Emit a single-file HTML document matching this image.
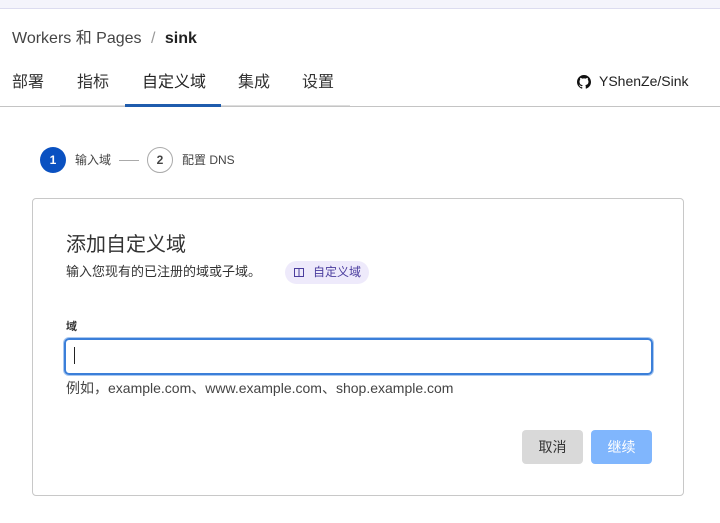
<!DOCTYPE html>
<html><head><meta charset="utf-8"><style>
*{margin:0;padding:0;box-sizing:border-box}
body{width:720px;height:523px;background:#fff;font-family:"Liberation Sans","Noto Sans CJK SC",sans-serif;color:#333;position:relative;overflow:hidden}
.top{position:absolute;left:0;top:0;width:720px;height:9px;background:#f4f4fb;border-bottom:1px solid #dcdcef}
.abs{position:absolute;white-space:nowrap}
</style></head><body>
<div class="top"></div>
<div class="abs" style="left:12px;top:24px;font-size:16px;color:#444">Workers 和 Pages <span style="color:#999;margin:0 5px">/</span> <b style="color:#222">sink</b></div>
<div class="abs" style="left:12px;top:68px;font-size:16px;color:#333">部署</div>
<div class="abs" style="left:77px;top:68px;font-size:16px;color:#333">指标</div>
<div class="abs" style="left:142px;top:68px;font-size:16px;color:#222">自定义域</div>
<div class="abs" style="left:238px;top:68px;font-size:16px;color:#333">集成</div>
<div class="abs" style="left:302px;top:68px;font-size:16px;color:#333">设置</div>
<div class="abs" style="left:0;top:106px;width:720px;height:1px;background:#c4c4c4"></div>
<div class="abs" style="left:60px;top:105px;width:290px;height:1px;background:#ddd"></div>
<div class="abs" style="left:125px;top:104px;width:96px;height:3px;background:#1f5cad"></div>
<svg class="abs" style="left:577px;top:75px" width="14" height="14" viewBox="0 0 16 16"><path fill="#111" d="M8 0C3.6 0 0 3.6 0 8c0 3.5 2.3 6.5 5.5 7.6.4.1.5-.2.5-.4v-1.4c-2.2.5-2.7-1-2.7-1-.4-.9-.9-1.2-.9-1.2-.7-.5.1-.5.1-.5.8.1 1.2.8 1.2.8.7 1.2 1.9.9 2.3.7.1-.5.3-.9.5-1.1-1.8-.2-3.6-.9-3.6-4 0-.9.3-1.6.8-2.1-.1-.2-.4-1 .1-2.1 0 0 .7-.2 2.2.8.6-.2 1.3-.3 2-.3s1.4.1 2 .3c1.5-1 2.2-.8 2.2-.8.4 1.1.2 1.9.1 2.1.5.6.8 1.3.8 2.1 0 3.1-1.9 3.7-3.6 3.9.3.3.5.8.5 1.5v2.2c0 .2.1.5.6.4C13.7 14.5 16 11.5 16 8c0-4.4-3.6-8-8-8z"/></svg>
<div class="abs" style="left:599px;top:73px;font-size:14px;color:#222">YShenZe/Sink</div>
<div class="abs" style="left:40px;top:147px;width:26px;height:26px;border-radius:50%;background:#0a51c1;color:#fff;font-size:12px;font-weight:bold;text-align:center;line-height:26px">1</div>
<div class="abs" style="left:75px;top:151px;font-size:12px;color:#444">输入域</div>
<div class="abs" style="left:119px;top:160px;width:20px;height:1px;background:#aaa"></div>
<div class="abs" style="left:147px;top:147px;width:26px;height:26px;border-radius:50%;border:1px solid #aaa;color:#444;font-size:12px;font-weight:bold;text-align:center;line-height:24px">2</div>
<div class="abs" style="left:182px;top:151px;font-size:12px;color:#444">配置 DNS</div>
<div class="abs" style="left:32px;top:198px;width:652px;height:298px;border:1px solid #c8c8c8;border-radius:4px"></div>
<div class="abs" style="left:66px;top:228px;font-size:20px;color:#333">添加自定义域</div>
<div class="abs" style="left:66px;top:261px;font-size:13px;color:#333">输入您现有的已注册的域或子域。</div>
<div class="abs" style="left:285px;top:261px;width:84px;height:23px;border-radius:12px;background:#eeeafb;color:#4b3d9e;font-size:12px;line-height:23px;padding-left:28px">自定义域</div>
<svg class="abs" style="left:294px;top:268px" width="10" height="9" viewBox="0 0 10 9"><rect x="0.5" y="0.5" width="9" height="8" fill="none" stroke="#4b3d9e"/><line x1="5" y1="0.5" x2="5" y2="8.5" stroke="#4b3d9e"/></svg>
<div class="abs" style="left:66px;top:318px;font-size:11px;font-weight:bold;color:#333">域</div>
<div class="abs" style="left:64px;top:338px;width:589px;height:37px;border:2px solid #3b7fd9;border-radius:5px;box-shadow:0 0 0 1px #a9c8f0"></div>
<div class="abs" style="left:74px;top:347px;width:1px;height:17px;background:#222"></div>
<div class="abs" style="left:66px;top:378px;font-size:14px;color:#444">例如，example.com、www.example.com、shop.example.com</div>
<div class="abs" style="left:522px;top:430px;width:61px;height:34px;border-radius:4px;background:#d9d9d9;color:#333;font-size:14px;text-align:center;line-height:34px">取消</div>
<div class="abs" style="left:591px;top:430px;width:61px;height:34px;border-radius:4px;background:#80b6fd;color:#fff;font-size:14px;text-align:center;line-height:34px">继续</div>
</body></html>
